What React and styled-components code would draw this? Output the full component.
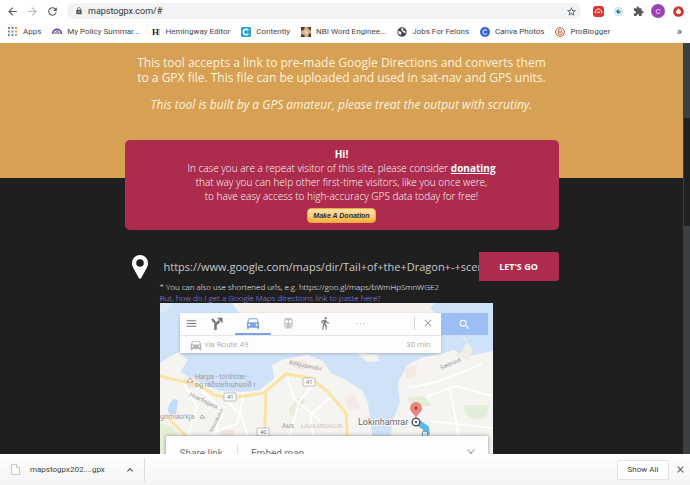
import React, { useState } from "react";
import styled, { createGlobalStyle } from "styled-components";
import {
    MdArrowBack,
    MdArrowForward,
    MdClose,
    MdDirectionsCar,
    MdDirectionsTransit,
    MdDirectionsWalk,
    MdExtension,
    MdKeyboardArrowUp,
    MdLock,
    MdMenu,
    MdRefresh,
    MdSearch,
    MdStarBorder,
} from "react-icons/md";

const AppsIcon = () => (
    <svg width="10" height="10" viewBox="0 0 10 10">
        {["#e06055", "#e06055", "#e8a33d", "#57a773", "#5b8def", "#e8a33d", "#57a773", "#5b8def", "#e8a33d"].map(
            (fill, i) => (
                <rect key={i} x={(i % 3) * 3.5} y={Math.floor(i / 3) * 3.5} width="2" height="2" fill={fill} />
            )
        )}
    </svg>
);

const UmbrellaIcon = () => (
    <svg width="10" height="10" viewBox="0 0 10 10" fill="none" stroke="#6d4a86">
        <path d="M.7 7C.7 .8 9.3 .8 9.3 7" strokeWidth="1.6" />
        <path d="M3 7C3 3.3 7 3.3 7 7M5 4.5V7" strokeWidth="1" />
    </svg>
);

const HemingwayIcon = () => (
    <svg width="10" height="10" viewBox="0 0 10 10">
        <text x="1" y="8" fontFamily="Liberation Serif, serif" fontSize="9" fontWeight="700" fill="#222">
            H
        </text>
        <path d="M8.5 1v8" stroke="#bbb" strokeWidth=".6" />
    </svg>
);

const ContentlyIcon = () => (
    <svg width="10" height="10" viewBox="0 0 10 10">
        <rect width="10" height="10" rx="1" fill="#35a3d3" />
        <path d="M7.3 3.2A2.8 2.8 0 1 0 7.3 6.8" fill="none" stroke="#fff" strokeWidth="1.5" />
    </svg>
);

const PhotoIcon = () => (
    <svg width="10" height="10" viewBox="0 0 10 10">
        <rect width="10" height="10" fill="#d3ae87" />
        <path d="M0 0h4L2.5 3 0 4zM6 0h4v4L8 2zM0 7l3 1 1 2H0zM8 7l2-1v4H7z" fill="#4b3b30" />
        <path d="M3 4l3-1 1 3-2 2z" fill="#e9cfae" />
    </svg>
);

const GlobeIcon = () => (
    <svg width="10" height="10" viewBox="0 0 10 10">
        <circle cx="5" cy="5" r="4.7" fill="#44474b" />
        <path d="M1 4l2.5.5 1 1.5L3.5 8 1.5 6.5zM4 1.2l2.5.4L6 3.5l2.5.8L8.8 6 6.5 5.5 5 4z" fill="#fff" />
    </svg>
);

const CanvaIcon = () => (
    <svg width="10" height="10" viewBox="0 0 10 10">
        <circle cx="5" cy="5" r="5" fill="#3a64d4" />
        <path d="M6.8 3.6A2.2 2.2 0 1 0 6.8 6.5" fill="none" stroke="#d9e6ff" strokeWidth="1.1" />
    </svg>
);

const ProBloggerIcon = () => (
    <svg width="10" height="10" viewBox="0 0 10 10" fill="none">
        <circle cx="5" cy="5" r="4.4" stroke="#9b6a59" />
        <path d="M3.5 2.5h2.2a1.2 1.2 0 0 1 0 2.5H3.5zM3.5 5h2.7a1.2 1.2 0 0 1 0 2.5H3.5z" stroke="#e2734f" />
    </svg>
);

const CloudExtIcon = () => (
    <svg width="11" height="11" viewBox="0 0 11 11">
        <rect width="11" height="11" rx="3" fill="#d8362f" />
        <path d="M3 7.5a1.6 1.6 0 0 1 .3-3A2.3 2.3 0 0 1 7.7 4.5 1.6 1.6 0 0 1 8 7.5M4 6.3h3" fill="none" stroke="#fff" />
    </svg>
);

const EyeExtIcon = () => (
    <svg width="9" height="9" viewBox="0 0 9 9">
        <circle cx="4.5" cy="4.5" r="4" fill="#e6f3f8" stroke="#a4cfdf" strokeWidth=".8" />
        <circle cx="4.5" cy="4.5" r="2.1" fill="#27718f" />
        <circle cx="5.3" cy="3.8" r=".7" fill="#fff" />
    </svg>
);

const UpdateIcon = () => (
    <svg width="11" height="11" viewBox="0 0 11 11">
        <circle cx="5.5" cy="5.5" r="5.3" fill="#d1332b" />
        <path d="M5.5 2.3L8.3 5.5 7 8H4L2.7 5.5z" fill="#fff" />
    </svg>
);

const FileIcon = () => (
    <svg width="9" height="11" viewBox="0 0 9 11" fill="#fff" stroke="#b9b9b9" strokeWidth=".8">
        <path d="M.5.5H5.5L8.5 3.5V10.5H.5z" />
        <path d="M5.5.5V3.5H8.5" />
    </svg>
);

const PinIcon = () => (
    <svg width="16" height="24" viewBox="0 0 16 24">
        <path
            fill="#fff"
            fillRule="evenodd"
            d="M8 0a8 8 0 0 0-8 8c0 2 .5 3.3 1.2 4.7L6.8 23a1.4 1.4 0 0 0 2.4 0L14.8 12.7C15.5 11.3 16 10 16 8a8 8 0 0 0-8-8zM8 4.2a3.8 3.8 0 1 1 0 7.6 3.8 3.8 0 0 1 0-7.6z"
        />
    </svg>
);

const TurnIcon = () => (
    <svg width="13" height="13" viewBox="0 0 13 13" fill="none" stroke="#757575">
        <path d="M5.5 13V7.5L9.5 4" strokeWidth="2.5" />
        <path d="M2 2l3.5 4" strokeWidth="2" />
        <path d="M7 .8h5.5v5.5z" fill="#757575" stroke="none" />
    </svg>
);

const MapDrawing = () => (
    <MapSvg viewBox="0 0 333 152" aria-hidden="true">
        <rect width="333" height="152" fill="#cfe2f8" />
        <path d="M0 0H14L5 9 0 11z" fill="#dce8f3" />
        <path d="M72 0H275L270 5 278 12H80z" fill="#f4f1ed" />
        <path d="M0 60L9 54 19 49 28 57 20 69 35 77 60 88 82 89 100 87 114 75 112 62 124 56 148 52 163 58 171 70 184 76 202 87 208 100 211 123 215 152H0z" fill="#f5f4f0" />
        <path d="M230 152L232 120 240 99 238 80 247 62 263 54 281 51 294 47 304 54 333 48V152z" fill="#f5f4f0" />
        <path d="M197 50L218 52 219 58 207 59z" fill="#f5f4f0" />
        <path d="M300 31L307 37 303 48 294 52 308 57 313 47z" fill="#f1eee7" />
        <path d="M9 102q5-9 9-4l-2 13q-8 3-8-5z" fill="#bddbfa" />
        <path d="M0 120l13 4 10 15-11 13H0z" fill="#e4efd8" />
        <path d="M60 127h14v11H62zM24 75l10-1 6 9-13 3z" fill="#f2e6e0" />
        <path
            d="M129 106q8-14 16-10l-2 6-9 6 5 3-8 2zM247 95l17-2 8 10-20-1zM304 102h25l-3 13q-16 4-22-8z"
            fill="#e2eed8"
        />
        <path d="M126 60l17-3 11 7-14 3zM184 94l10-4 6 15-12 2zM246 65l12-4-3 13-9 2z" fill="#f5e9e5" />
        <g fill="none" stroke="#fff" strokeWidth="2">
            <path d="M22 76L37 104 28 133M38 84L63 108 53 134M62 93L81 112 94 152M84 89L77 121 50 130" />
            <path d="M127 74L134 96 161 118M154 80L139 99 128 139M171 94L150 112 154 136M249 85L280 78 322 61M266 94L295 83 333 93M270 118L333 125M290 86L302 150" />
        </g>
        <g fill="none" stroke="#fae3a3" strokeWidth="3" strokeLinejoin="round">
            <path d="M0 73L20 78 39 82 54 92 70 95 104 90 126 71 151 75 168 89 186 110 188 142" />
            <path d="M106 90L104 145M9 116L29 136" />
        </g>
        <g fill="#fff" stroke="#999" strokeWidth=".6">
            <rect x="64" y="90" width="12" height="8" rx="1" />
            <rect x="143" y="75" width="12" height="8" rx="1" />
            <rect x="97" y="125" width="12" height="8" rx="1" />
        </g>
        <g fontFamily="Roboto, sans-serif" fontSize="6" fill="#777">
            <text x="67" y="96">41</text>
            <text x="146" y="81">41</text>
            <text x="100" y="131">40</text>
        </g>
        <g fontFamily="Roboto, sans-serif" fontSize="7" fill="#9a9da3">
            <text x="35" y="76">Harpa - tónlistar-</text>
            <text x="35" y="84">og ráðstefnuhúsið í</text>
            <text x="0" y="116">grímskirkja</text>
            <text x="122" y="125">Aus</text>
            <text x="141" y="125" fill="#c4c4c4" fontSize="6">LAUGARDALUR</text>
            <text transform="translate(29 93) rotate(25)" fontSize="6">Hverfisgata</text>
            <text transform="translate(52 130) rotate(-64)" fontSize="5">Snorrabraut</text>
            <text transform="translate(129 61) rotate(12)" fontSize="6">Kirkjusandur</text>
            <text transform="translate(281 67) rotate(-24)" fontSize="6">Sæbraut</text>
        </g>
        <g fill="#fff" stroke="#888" strokeWidth=".7">
            <path d="M27 79l3-4 3 4zM40 115l2-3 3 3z" />
        </g>
        <path d="M257 119L266 125 267 132" fill="none" stroke="#5bb7e8" strokeWidth="6" />
        <circle cx="265" cy="131" r="3" fill="#cbe7f5" stroke="#778d99" />
        <path d="M256 116C255 110 250 110 250 105A6 6 0 0 1 262 105C262 110 257 110 256 116z" fill="#ea8580" />
        <circle cx="256" cy="105" r="1.7" fill="#a54340" />
        <circle cx="256" cy="119" r="3.8" fill="#fff" stroke="#555" strokeWidth="1.4" />
        <circle cx="256" cy="119" r="1.2" fill="#555" />
        <text x="198" y="122" fontFamily="Roboto, sans-serif" fontSize="9" fill="#5d5d5d" stroke="#fff" strokeWidth="1.5" paintOrder="stroke">
            Lokinhamrar
        </text>
    </MapSvg>
);

const bookmarks = [
    { label: "Apps", Icon: AppsIcon },
    { label: "My Policy Summar...", Icon: UmbrellaIcon },
    { label: "Hemingway Editor", Icon: HemingwayIcon },
    { label: "Contently", Icon: ContentlyIcon },
    { label: "NBI Word Enginee...", Icon: PhotoIcon },
    { label: "Jobs For Felons", Icon: GlobeIcon },
    { label: "Canva Photos", Icon: CanvaIcon },
    { label: "ProBlogger", Icon: ProBloggerIcon },
];

const travelModes = [
    { name: "Best route", icon: <TurnIcon /> },
    { name: "Driving", icon: <MdDirectionsCar size={16} /> },
    { name: "Transit", icon: <MdDirectionsTransit size={13} /> },
    { name: "Walking", icon: <MdDirectionsWalk size={14} /> },
    { name: "More", icon: "···" },
];

const BrowserBar = () => (
    <Chrome>
        <AddressRow>
            <IconButton aria-label="Back"><MdArrowBack size={13} /></IconButton>
            <IconButton aria-label="Forward" $color="#b5b7ba"><MdArrowForward size={13} /></IconButton>
            <IconButton aria-label="Reload"><MdRefresh size={13} /></IconButton>
            <AddressPill>
                <MdLock size={8} />
                <AddressInput aria-label="Address" defaultValue="mapstogpx.com/#" />
                <IconButton aria-label="Bookmark this page"><MdStarBorder size={11} /></IconButton>
            </AddressPill>
            <IconButton aria-label="Cloud extension"><CloudExtIcon /></IconButton>
            <IconButton aria-label="Eye extension"><EyeExtIcon /></IconButton>
            <IconButton aria-label="Extensions"><MdExtension size={11} /></IconButton>
            <Avatar aria-label="Profile">C</Avatar>
            <IconButton aria-label="Update"><UpdateIcon /></IconButton>
        </AddressRow>
        <BookmarkRow>
            {bookmarks.map(({ label, Icon }) => (
                <Bookmark key={label} href="#">
                    <Icon />
                    {label}
                </Bookmark>
            ))}
            <MoreButton aria-label="More bookmarks">»</MoreButton>
        </BookmarkRow>
    </Chrome>
);

const DirectionsHelp = () => {
    const [mode, setMode] = useState("Driving");

    return (
        <MapBox>
            <MapDrawing />
            <MapSearch>
                <ModePanel>
                    <ModeRow>
                        <ModeButton aria-label="Menu"><MdMenu size={13} /></ModeButton>
                        {travelModes.map(({ name, icon }) => (
                            <ModeButton
                                key={name}
                                aria-label={name}
                                $active={mode === name}
                                $faded={name === "Transit" || name === "More"}
                                onClick={() => setMode(name)}
                            >
                                {icon}
                            </ModeButton>
                        ))}
                        <CloseMode aria-label="Close directions"><MdClose size={12} /></CloseMode>
                    </ModeRow>
                    <RouteRow>
                        <MdDirectionsCar size={14} />
                        <span>via Route 49</span>
                        <RouteTime>30 min</RouteTime>
                    </RouteRow>
                </ModePanel>
                <SearchButton aria-label="Search"><MdSearch size={13} /></SearchButton>
            </MapSearch>
            <ShareDialog>
                <ShareTab>Share link</ShareTab>
                <ShareTab>Embed map</ShareTab>
                <ShareClose aria-label="Close share"><MdClose size={14} /></ShareClose>
            </ShareDialog>
        </MapBox>
    );
};

const App = () => (
    <>
        <GlobalStyle />
        <Window>
            <BrowserBar />
            <Viewport>
                <Page>
                    <Hero>
                        <HeroText>
                            This tool accepts a link to pre-made Google Directions and converts them
                            <br />
                            to a GPX file. This file can be uploaded and used in sat-nav and GPS units.
                        </HeroText>
                        <HeroNote>This tool is built by a GPS amateur, please treat the output with scrutiny.</HeroNote>
                    </Hero>
                    <Content>
                        <DonateCard>
                            <strong>Hi!</strong>
                            <br />
                            In case you are a repeat visitor of this site, please consider <a href="#donate">donating</a>
                            <br />
                            that way you can help other first-time visitors, like you once were,
                            <br />
                            to have easy access to high-accuracy GPS data today for free!
                            <DonateButton>Make A Donation</DonateButton>
                        </DonateCard>
                        <UrlForm onSubmit={(e) => e.preventDefault()}>
                            <PinLabel htmlFor="route-url" aria-label="Google Maps link">
                                <PinIcon />
                            </PinLabel>
                            <UrlInput
                                id="route-url"
                                defaultValue="https://www.google.com/maps/dir/Tail+of+the+Dragon+-+scenic+drive"
                            />
                            <GoButton>LET'S GO</GoButton>
                        </UrlForm>
                        <Help>
                            <HelpText>* You can also use shortened urls, e.g. https://goo.gl/maps/bWmHpSmnWGE2</HelpText>
                            <HelpLink href="#help">But, how do I get a Google Maps directions link to paste here?</HelpLink>
                            <DirectionsHelp />
                        </Help>
                    </Content>
                </Page>
                <Scrollbar>
                    <ScrollThumb />
                </Scrollbar>
            </Viewport>
            <DownloadBar>
                <DownloadItem>
                    <FileIcon />
                    <FileName>mapstogpx202....gpx</FileName>
                    <MdKeyboardArrowUp size={12} />
                </DownloadItem>
                <ShowAll>Show All</ShowAll>
                <IconButton aria-label="Close downloads"><MdClose size={11} /></IconButton>
            </DownloadBar>
        </Window>
    </>
);

export default App;

const GlobalStyle = createGlobalStyle`
    * {
        box-sizing: border-box;
    }
    body {
        margin: 0;
        font-family: Roboto, sans-serif;
    }
    button, input {
        font-family: inherit;
        border: 0;
        padding: 0;
        background: transparent;
    }
    button {
        cursor: pointer;
    }
`;

const Window = styled.div`
    display: flex;
    flex-direction: column;
    height: 100vh;
    overflow: hidden;
`;

const Chrome = styled.header`
    background: #fff;
    color: #55585c;
`;

const AddressRow = styled.div`
    display: flex;
    align-items: center;
    gap: 6px;
    height: 22px;
    padding: 0 5px;
`;

const IconButton = styled.button`
    display: flex;
    align-items: center;
    justify-content: center;
    flex: none;
    width: 14px;
    height: 14px;
    color: ${({ $color }) => $color || "#55585c"};
`;

const AddressPill = styled.div`
    display: flex;
    align-items: center;
    flex: 1;
    height: 16px;
    margin: 0 4px 0 2px;
    padding: 0 3px 0 8px;
    border-radius: 8px;
    background: #f1f3f4;
`;

const AddressInput = styled.input`
    flex: 1;
    min-width: 0;
    margin-left: 5px;
    font-size: 9px;
    color: #333;
    outline: 0;
`;

const Avatar = styled(IconButton)`
    border-radius: 50%;
    background: #9c43b5;
    color: #f0dcf5;
    font-size: 8px;
`;

const BookmarkRow = styled.nav`
    display: flex;
    align-items: center;
    gap: 11px;
    height: 21px;
    padding: 0 8px 2px;
    font-size: 8px;
`;

const Bookmark = styled.a`
    display: flex;
    align-items: center;
    gap: 5px;
    color: #44474a;
    text-decoration: none;
    white-space: nowrap;
`;

const MoreButton = styled.button`
    margin-left: auto;
    font-size: 11px;
    color: #44474a;
`;

const Viewport = styled.main`
    display: flex;
    flex: 1;
    min-height: 0;
    background: #1f1f1f;
`;

const Page = styled.div`
    flex: 1;
    min-width: 0;
    overflow: hidden;
    font-family: "Open Sans", sans-serif;
`;

const Hero = styled.section`
    padding: 12px 16px 66px;
    background: #d6a055;
    color: #fff3dc;
    font-size: 12px;
    line-height: 15px;
    text-align: center;
`;

const HeroText = styled.p`
    margin: 0;
`;

const HeroNote = styled.p`
    margin: 12px 0 0;
    font-style: italic;
`;

const Content = styled.div`
    max-width: 434px;
    margin: -38px auto 0;
`;

const DonateCard = styled.section`
    padding: 7px 12px;
    border-radius: 5px;
    background: #ad2b4c;
    color: #fff;
    font-size: 10px;
    font-weight: 300;
    line-height: 14px;
    text-align: center;

    strong {
        font-weight: 700;
    }

    a {
        color: #fff;
        font-weight: 700;
    }
`;

const DonateButton = styled.button`
    display: block;
    height: 15px;
    margin: 5px auto 0;
    padding: 0 5px;
    border: 1px solid #f0a83c;
    border-radius: 4px;
    background: linear-gradient(#ffe3a6, #fdc96b 60%, #f9ae3d);
    color: #2b2a4a;
    font-family: "Liberation Sans", sans-serif;
    font-size: 7px;
    font-style: italic;
    font-weight: 700;
`;

const UrlForm = styled.form`
    display: flex;
    align-items: center;
    height: 29px;
    margin-top: 22px;
`;

const PinLabel = styled.label`
    display: flex;
    justify-content: center;
    flex: none;
    width: 30px;
    margin-right: 9px;
`;

const UrlInput = styled.input`
    flex: 1;
    min-width: 0;
    height: 29px;
    color: #c9c9c9;
    font-size: 11px;
    outline: 0;
`;

const GoButton = styled.button`
    flex: none;
    width: 80px;
    height: 29px;
    border-radius: 0 3px 3px 0;
    background: #ad2b4c;
    color: #fff;
    font-size: 9px;
    font-weight: 700;
`;

const Help = styled.div`
    display: flex;
    flex-direction: column;
    align-items: flex-start;
    padding-left: 35px;
    font-size: 8px;
    font-weight: 300;
    line-height: 11px;
`;

const HelpText = styled.p`
    margin: 0;
    color: #fff;
`;

const HelpLink = styled.a`
    color: #9a90ff;
    text-decoration: none;
`;

const MapBox = styled.div`
    position: relative;
    width: 100%;
    max-width: 333px;
    padding: 10px 5px 0 6px;
    background: #f4f2ec;
    font-family: Roboto, sans-serif;
    font-weight: 400;
`;

const MapSvg = styled.svg`
    position: absolute;
    inset: 0;
    width: 100%;
`;

const MapSearch = styled.div`
    position: relative;
    display: flex;
    align-items: flex-start;
    padding-left: 14px;
`;

const ModePanel = styled.div`
    flex: 1;
    background: #fdfdfd;
    box-shadow: 0 1px 3px #0003;
`;

const ModeRow = styled.div`
    display: flex;
    height: 23px;
    padding-left: 5px;
    border-bottom: 1px solid #e6e6e6;
`;

const ModeButton = styled.button`
    display: flex;
    align-items: center;
    justify-content: center;
    flex: 0 1 36px;
    border-bottom: 2px solid ${({ $active }) => ($active ? "#7da2e0" : "transparent")};
    color: ${({ $active, $faded }) => ($active ? "#7da2e0" : $faded ? "#c4c4c4" : "#7c7c7c")};

    &:first-child {
        flex: none;
        width: 14px;
    }
`;

const CloseMode = styled(ModeButton)`
    flex: none;
    width: 27px;
    height: 14px;
    margin: 4px 0 0 auto;
    border-left: 1px solid #d5d5d5;
    color: #a8a8a8;
`;

const RouteRow = styled.div`
    display: flex;
    align-items: center;
    gap: 2px;
    height: 17px;
    padding: 0 10px 0 9px;
    color: #b4b4b4;
    font-size: 8px;
`;

const RouteTime = styled.span`
    margin-left: auto;
`;

const SearchButton = styled.button`
    display: flex;
    align-items: center;
    justify-content: center;
    width: 47px;
    height: 22px;
    background: #9dbdf5;
    color: #fff;
`;

const ShareDialog = styled.div`
    position: relative;
    display: flex;
    align-items: center;
    height: 60px;
    margin-top: 83px;
    padding: 0 10px 26px 4px;
    background: #fdfdfd;
    box-shadow: 0 0 4px #0006;
`;

const ShareTab = styled.button`
    height: 16px;
    padding: 0 14px 0 10px;
    color: #777;
    font-size: 10px;

    & + & {
        border-left: 1px solid #ddd;
        padding-left: 13px;
    }
`;

const ShareClose = styled(IconButton)`
    margin-left: auto;
    color: #aaa;
`;

const Scrollbar = styled.div`
    flex: none;
    width: 7px;
    padding: 75px 0 0 1px;
    background: #3b4043;
`;

const ScrollThumb = styled.div`
    height: 108px;
    background: #202122;
`;

const DownloadBar = styled.footer`
    display: flex;
    align-items: center;
    gap: 4px;
    height: 31px;
    padding: 0 3px 0 11px;
    background: linear-gradient(#fff, #f4f4f4);
    color: #444;
`;

const DownloadItem = styled.div`
    display: flex;
    align-items: center;
    height: 24px;
    margin-right: auto;
    padding-right: 8px;
    border-right: 1px solid #ddd;
`;

const FileName = styled.span`
    margin: 0 19px 0 10px;
    font-size: 8px;
`;

const ShowAll = styled.button`
    width: 52px;
    height: 20px;
    border: 1px solid #e2e2e2;
    border-radius: 2px;
    background: #fff;
    color: #444;
    font-size: 8px;
`;
